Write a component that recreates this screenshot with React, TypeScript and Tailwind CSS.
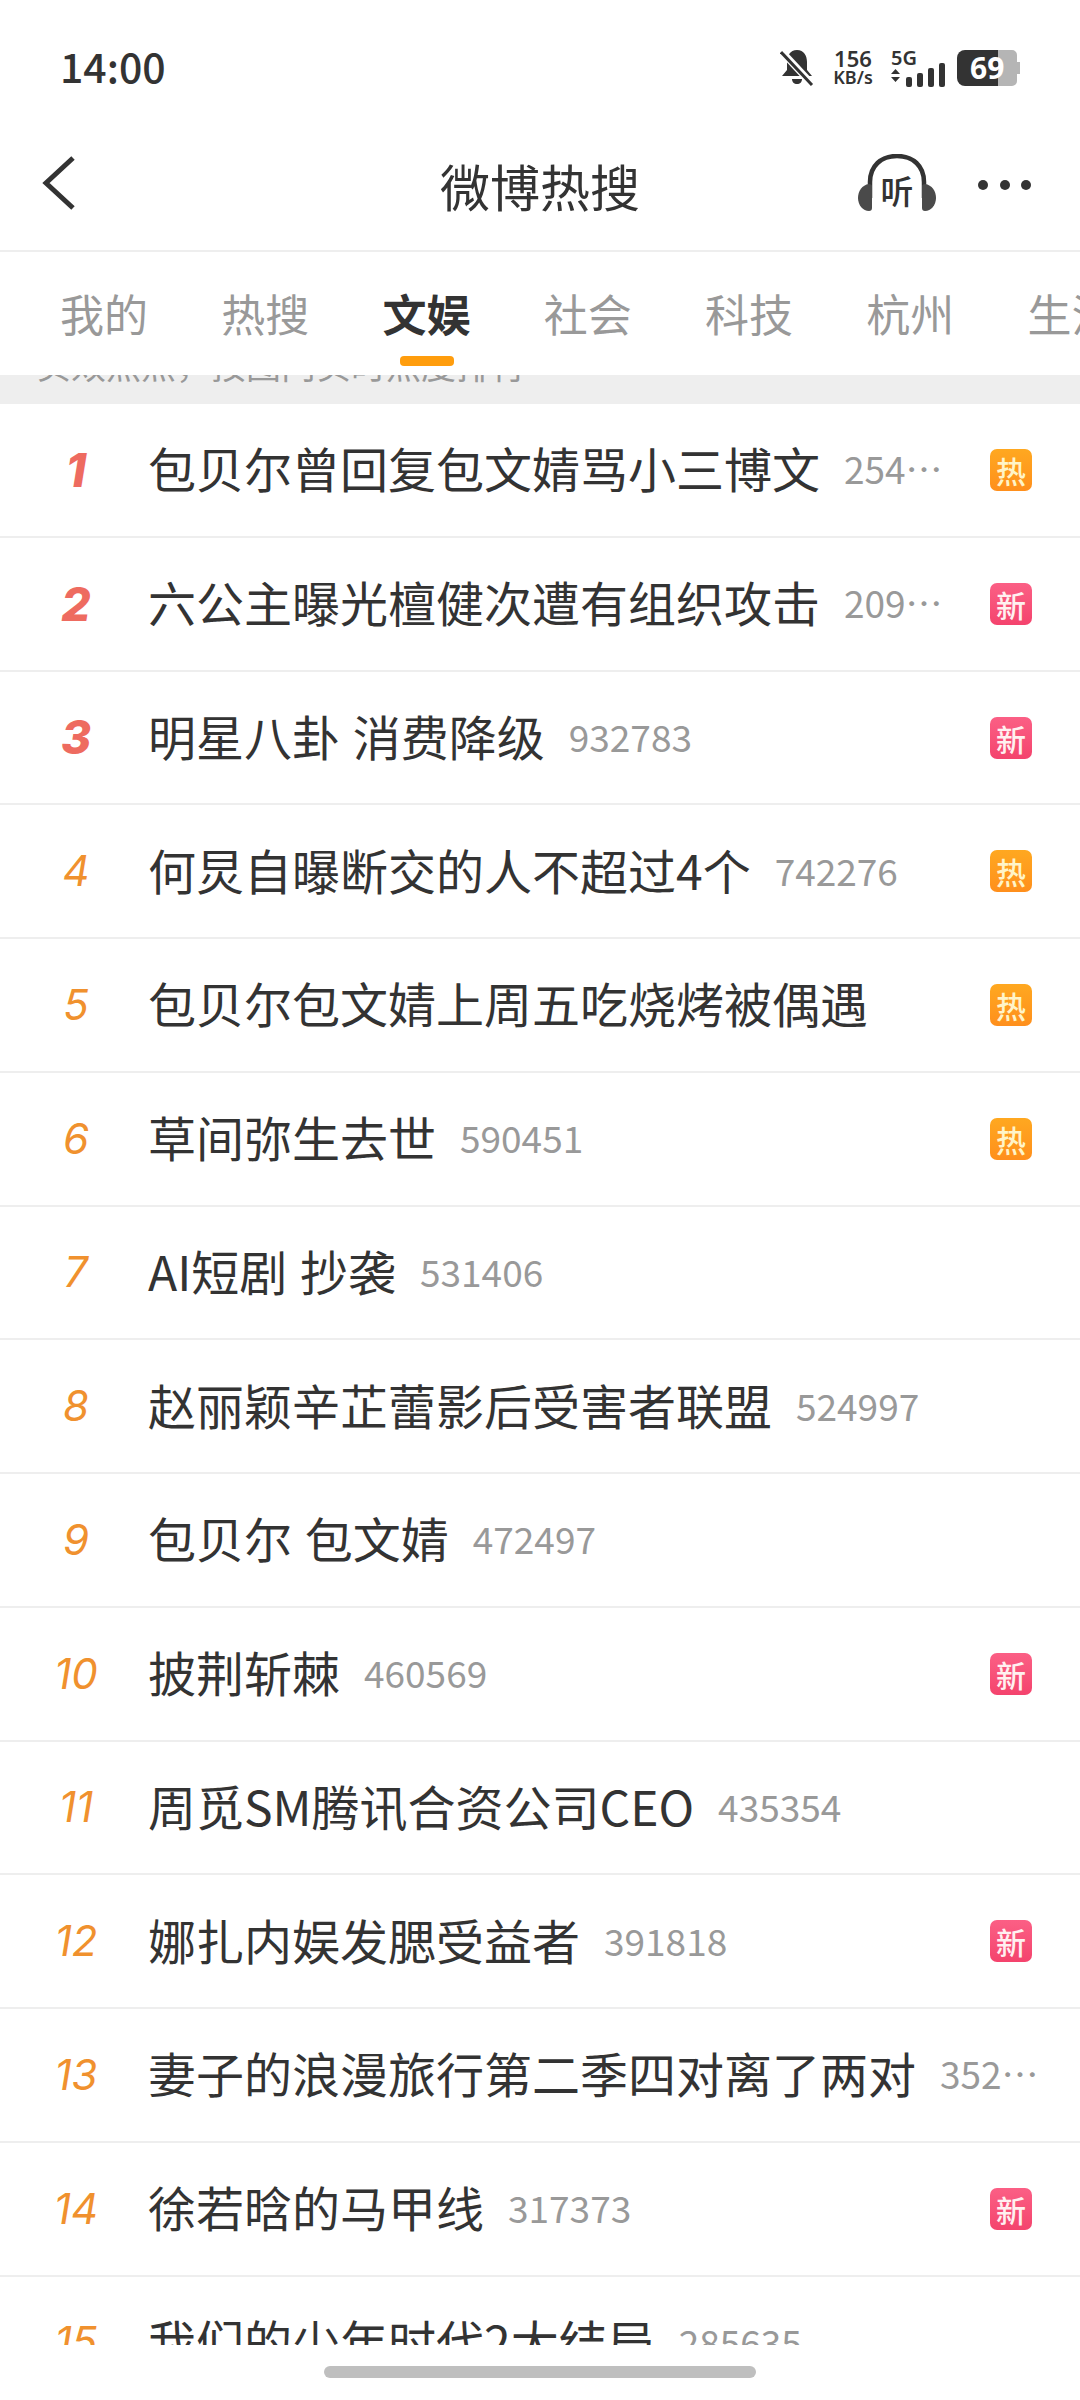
import React from "react";

type Row = { n: number; title: string; count?: string; badge?: "hot" | "new" };

const rows: Row[] = [
  { n: 1, title: "包贝尔曾回复包文婧骂小三博文", count: "254⋯", badge: "hot" },
  { n: 2, title: "六公主曝光檀健次遭有组织攻击", count: "209⋯", badge: "new" },
  { n: 3, title: "明星八卦 消费降级", count: "932783", badge: "new" },
  { n: 4, title: "何炅自曝断交的人不超过4个", count: "742276", badge: "hot" },
  { n: 5, title: "包贝尔包文婧上周五吃烧烤被偶遇", badge: "hot" },
  { n: 6, title: "草间弥生去世", count: "590451", badge: "hot" },
  { n: 7, title: "AI短剧 抄袭", count: "531406" },
  { n: 8, title: "赵丽颖辛芷蕾影后受害者联盟", count: "524997" },
  { n: 9, title: "包贝尔 包文婧", count: "472497" },
  { n: 10, title: "披荆斩棘", count: "460569", badge: "new" },
  { n: 11, title: "周觅SM腾讯合资公司CEO", count: "435354" },
  { n: 12, title: "娜扎内娱发腮受益者", count: "391818", badge: "new" },
  { n: 13, title: "妻子的浪漫旅行第二季四对离了两对", count: "352⋯" },
  { n: 14, title: "徐若晗的马甲线", count: "317373", badge: "new" },
  { n: 15, title: "我们的少年时代2大结局", count: "285635" },
];

const tabs = ["我的", "热搜", "文娱", "社会", "科技", "杭州", "生活"];

function StatusBar() {
  return (
    <div className="h-[92px] shrink-0 flex items-center justify-between pl-[60px] pr-[60px] pt-[44px]">
      <span className="text-[41px] leading-none font-medium text-[#333] -mt-[6px] font-['Noto_Sans_CJK_SC',sans-serif]">14:00</span>
      <div className="flex items-center h-[38px]">
        <svg width="34" height="38" viewBox="0 0 34 38" className="mr-[17px]">
          <path d="M17 1c7 0 10 6 10 12v8l5 6H2l5-6v-8C7 7 10 1 17 1z" fill="#333" />
          <path d="M12 30h10c0 3-2 5-5 5s-5-2-5-5z" fill="#333" />
          <path d="M2 3l30 32" stroke="#fff" strokeWidth="7" />
          <path d="M1 3l31 33" stroke="#333" strokeWidth="3" />
        </svg>
        <div className="flex flex-col items-center w-[44px] mr-[16px] -mt-[1px] font-['Noto_Sans',sans-serif] font-semibold text-[#333]">
          <span className="text-[22px] leading-[20px]">156</span>
          <span className="text-[18px] leading-[19px]">KB/s</span>
        </div>
        <div className="flex flex-col mr-[10px] w-[56px]">
          <span className="text-[20px] leading-[16px] font-semibold text-[#333] font-['Noto_Sans',sans-serif]">5G</span>
          <svg width="56" height="24" viewBox="0 0 56 24" className="-mt-[3px]">
            <path d="M0 11l4.500-5 4.500 5zM0 14l4.500 5 4.500-5z" fill="#333" />
            <rect x="15" y="14" width="6" height="10" rx="2" fill="#333" />
            <rect x="26" y="10" width="6" height="14" rx="2" fill="#333" />
            <rect x="37" y="5" width="6" height="19" rx="2" fill="#333" />
            <rect x="48" y="0" width="6" height="24" rx="2" fill="#333" />
          </svg>
        </div>
        <div className="relative w-[63px] h-[36px] font-['Noto_Sans',sans-serif]">
          <svg width="63" height="36" viewBox="0 0 63 36">
            <path d="M8 0h33v36H8a8 8 0 0 1-8-8V8a8 8 0 0 1 8-8z" fill="#333" />
            <path d="M41 0h14a5 5 0 0 1 5 5v7h3v12h-3v7a5 5 0 0 1-5 5H41z" fill="#b5b5b5" />
          </svg>
          <span className="absolute left-[13px] top-0 text-[30px] leading-[36px] font-bold text-white">69</span>
        </div>
      </div>
    </div>
  );
}

function NavBar() {
  return (
    <div className="h-[160px] shrink-0 grid grid-cols-[minmax(0,1fr)_auto_minmax(0,1fr)] items-center pl-[40px] pr-[49px] pt-[28px] border-b-[2px] border-[#eeeeee]">
      <svg width="38" height="58" viewBox="0 0 38 58" className="-mt-[4px]">
        <path d="M33 4L6 29l27 25" fill="none" stroke="#333" strokeWidth="5" />
      </svg>
      <div className="text-[50px] leading-none text-[#333] pl-[9px]">微博热搜</div>
      <div className="flex items-center justify-end">
        <div className="relative w-[80px] h-[58px] mr-[41px] -mt-[4px]">
          <svg width="80" height="58" viewBox="0 0 80 58">
            <path d="M13 44V28C13 12 24 2 40 2s27 10 27 26v16" fill="none" stroke="#333" strokeWidth="4.500" />
            <path d="M12 30c-7 1-11 7-11 14 0 7 5 13 11 13 2 0 3-1 3-3V32c0-1-1-2-3-2z" fill="#4a4a4a" />
            <path d="M68 30c7 1 11 7 11 14 0 7-5 13-11 13-2 0-3-1-3-3V32c0-1 1-2 3-2z" fill="#4a4a4a" />
          </svg>
          <span className="absolute left-0 right-0 top-[16px] text-center text-[33px] leading-[40px] font-medium text-[#333]">听</span>
        </div>
        <div className="flex gap-[11.500px]">
          <span className="w-[10px] h-[10px] rounded-full bg-[#333]" />
          <span className="w-[10px] h-[10px] rounded-full bg-[#333]" />
          <span className="w-[10px] h-[10px] rounded-full bg-[#333]" />
        </div>
      </div>
    </div>
  );
}

function Tabs() {
  return (
    <div className="h-[123px] shrink-0 flex gap-[73.250px] pl-[60px] overflow-hidden whitespace-nowrap">
      {tabs.map((t) => {
        const active = t === "文娱";
        return (
          <div key={t} className="flex flex-col items-center shrink-0 pt-[31px]">
            <span className={active ? "text-[44px] leading-[60px] font-bold text-[#333]" : "text-[44px] leading-[60px] text-[#999]"}>{t}</span>
            {active ? <span className="mt-[13px] w-[54px] h-[10px] rounded-[4px] bg-[#ff9d0d]" /> : null}
          </div>
        );
      })}
    </div>
  );
}

function Notice() {
  return (
    <div className="h-[29px] shrink-0 bg-[#eeeeee] overflow-hidden pl-[36px]">
      <div className="-mt-[36px] text-[35px] leading-[50px] text-[#999] whitespace-nowrap">实效热点，按图内实时热度排行</div>
    </div>
  );
}

function Badge({ kind }: { kind: "hot" | "new" }) {
  return kind === "hot" ? (
    <span className="absolute right-[48px] top-[45px] w-[42px] h-[42px] rounded-[7px] flex items-center justify-center text-[30px] leading-none font-medium text-[#fff4c8] bg-gradient-to-b from-[#ffa820] to-[#ff8f1c]">热</span>
  ) : (
    <span className="absolute right-[48px] top-[45px] w-[42px] h-[42px] rounded-[7px] flex items-center justify-center text-[30px] leading-none font-medium text-[#fff0f0] bg-gradient-to-b from-[#fb5f85] to-[#f4436d]">新</span>
  );
}

function ListRow({ row }: { row: Row }) {
  const top = row.n <= 3;
  return (
    <div className="relative h-[133.75px] shrink-0 flex items-center border-b-[2px] border-[#eeeeee]">
      <span
        className={
          top
            ? "w-[148px] pl-[4px] shrink-0 text-center italic font-extrabold text-[46px] leading-none text-[#ee6b60] font-['Inter',sans-serif]"
            : "w-[148px] pl-[4px] shrink-0 text-center italic font-normal text-[42px] leading-none text-[#f0912e] font-['Inter',sans-serif]"
        }
      >
        {row.n}
      </span>
      <span className="mb-[5px] text-[48px] leading-none text-[#333] whitespace-nowrap [word-spacing:2px]">{row.title}</span>
      {row.count ? <span className="ml-[24px] mb-[2px] text-[37px] leading-none text-[#999] whitespace-nowrap">{row.count}</span> : null}
      {row.badge ? <Badge kind={row.badge} /> : null}
    </div>
  );
}

export default function App() {
  return (
    <div className="w-[1080px] h-[2400px] bg-white flex flex-col overflow-hidden font-['Noto_Sans_CJK_SC',sans-serif]">
      <StatusBar />
      <NavBar />
      <Tabs />
      <Notice />
      <div className="h-[1941px] shrink-0 overflow-hidden flex flex-col">
        {rows.map((r) => (
          <ListRow key={r.n} row={r} />
        ))}
      </div>
      <div className="flex-1 flex items-center justify-center bg-white pb-[2px]">
        <span className="w-[432px] h-[12px] rounded-full bg-[#bfbfbf]" />
      </div>
    </div>
  );
}
